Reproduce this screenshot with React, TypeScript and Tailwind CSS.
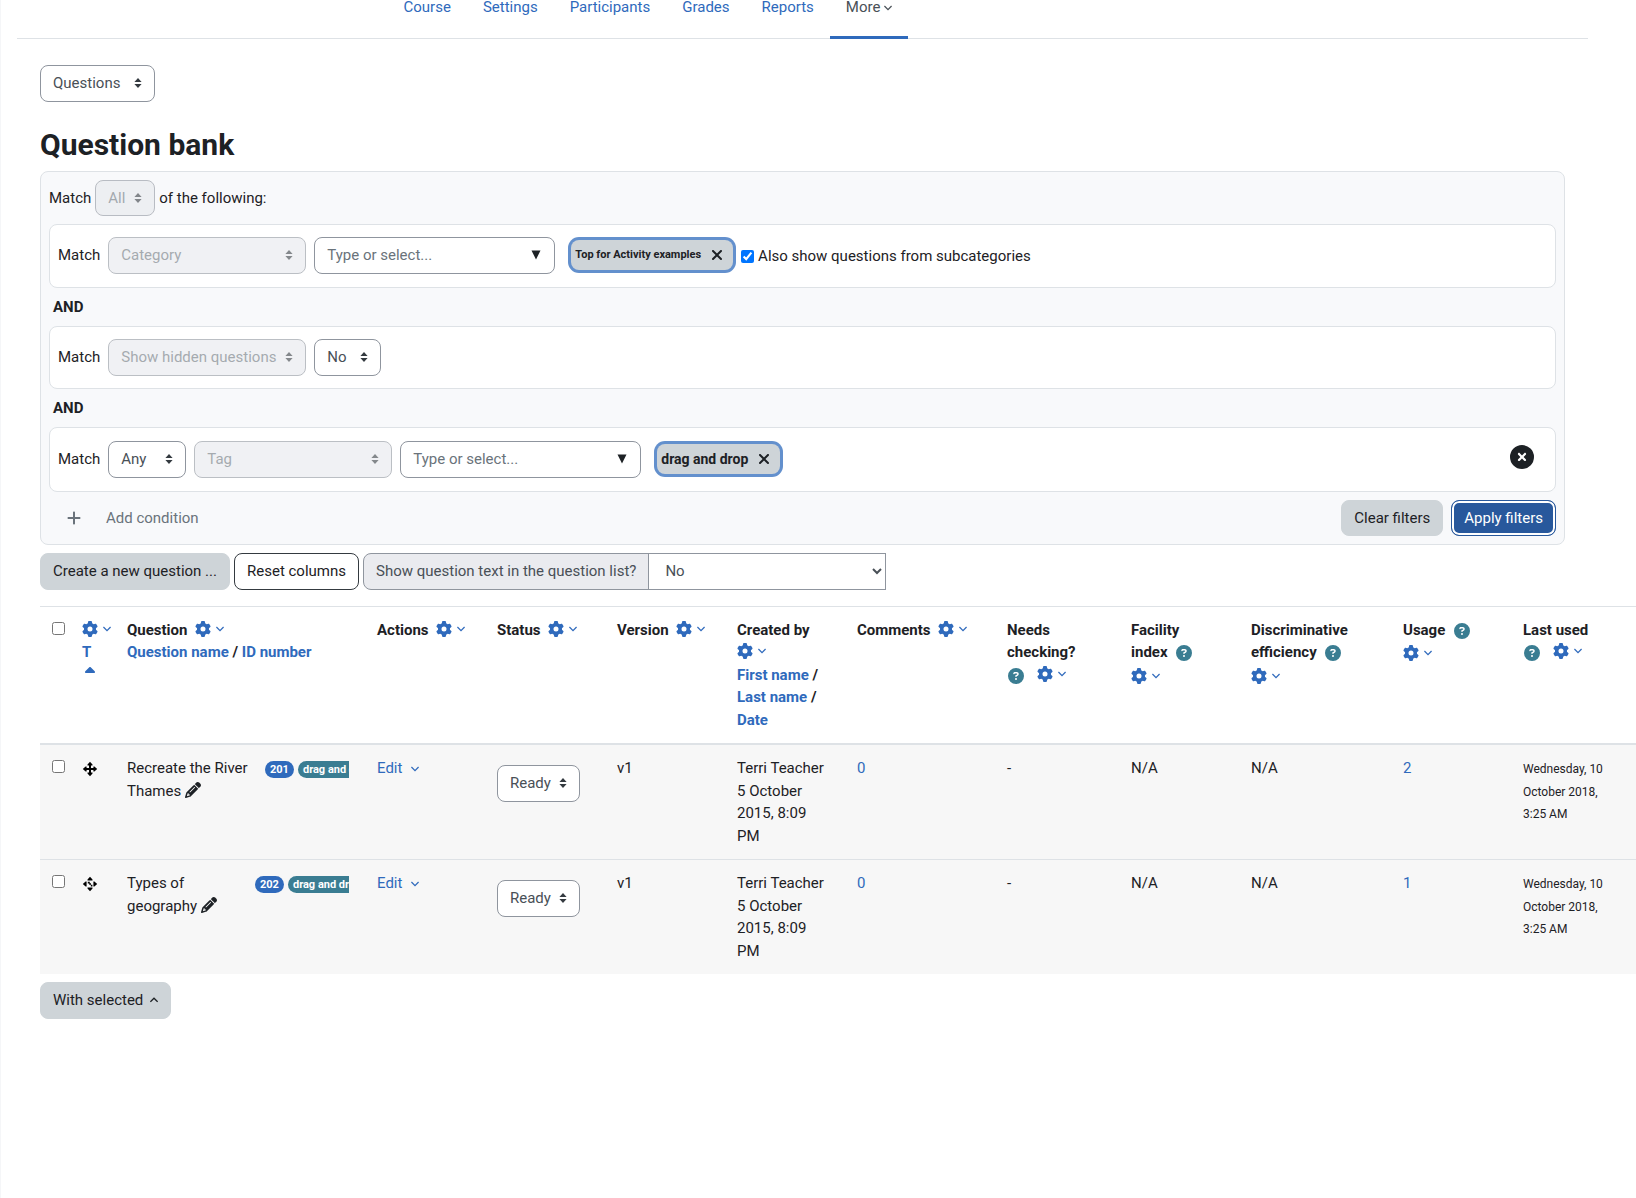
import type { ComponentProps, ReactNode } from "react";
import { FaCircleQuestion, FaCircleXmark, FaGear, FaPencil, FaPlus, FaSortUp, FaXmark } from "react-icons/fa6";

function Chevron({ up = false }: { up?: boolean }) {
  return (
    <svg viewBox="0 0 8 8" className="inline-block size-2 align-middle" fill="none" stroke="currentColor" strokeWidth="1.3" aria-hidden="true">
      <path d={up ? "M0.4 5.8 4 2.2 7.6 5.8" : "M0.4 2 4 5.6 7.6 2"} />
    </svg>
  );
}

function Updown() {
  return (
    <svg viewBox="0 0 8 10" className="pointer-events-none absolute right-[13px] top-1/2 h-[10px] w-2 -translate-y-1/2" fill="currentColor" aria-hidden="true">
      <path d="M4 0 7.600 4H.4zM4 10 .4 6h7.200z" />
    </svg>
  );
}

function Select({ label, value, width, disabled = false }: { label: string; value: string; width: string; disabled?: boolean }) {
  return (
    <span className={`relative inline-block text-[#343a40] ${disabled ? "opacity-60" : ""} ${width}`}>
      <select
        aria-label={label}
        disabled={disabled}
        className={`w-full appearance-none rounded-lg border border-[#8f959e] px-3 py-[6px] leading-normal opacity-100 ${
          disabled ? "bg-[#e7e9ed] text-[#6a737b]" : "bg-white text-[#495057]"
        }`}
      >
        <option>{value}</option>
      </select>
      <Updown />
    </span>
  );
}

function Combo({ label }: { label: string }) {
  return (
    <span className="relative inline-block w-[241px]">
      <input
        aria-label={label}
        placeholder="Type or select..."
        className="w-full rounded-lg border border-[#8f959e] bg-white py-[6px] pl-3 pr-8 leading-normal placeholder:text-[#6a737b]"
      />
      <svg viewBox="0 0 10 10" className="pointer-events-none absolute right-[14px] top-1/2 size-[10px] -translate-y-1/2" fill="currentColor" aria-hidden="true">
        <path d="M.5 .5h9L5 9.500z" />
      </svg>
    </span>
  );
}

function Token({ children, className }: { children: ReactNode; className: string }) {
  return (
    <button className={`m-[3px] flex h-[30px] items-center gap-2 rounded-lg bg-[#ced4d8] pr-2 pl-1 font-bold text-[#1d2125] ring-3 ring-[#6390cd] ${className}`}>
      {children}
      <FaXmark className="size-4" />
    </button>
  );
}

function Card({ children, className }: { children: ReactNode; className: string }) {
  return <div className={`flex items-start gap-2 rounded-lg border border-[#dee2e6] bg-white px-2 ${className}`}>{children}</div>;
}

function And() {
  return <div className="my-2 pl-1 font-bold">AND</div>;
}

function Gear({ className = "" }: { className?: string }) {
  return (
    <button aria-label="Column options" className={`inline-flex items-center gap-[5px] align-top text-[#2f6abc] ${className}`}>
      <FaGear className="size-4" />
      <span className="flex w-2">
        <Chevron />
      </span>
    </button>
  );
}

function Help({ className = "" }: { className?: string }) {
  return (
    <button aria-label="Help" className={`inline-block px-px align-middle text-[#3a7d92] ${className}`}>
      <FaCircleQuestion className="size-4" />
    </button>
  );
}

function Link(props: ComponentProps<"a">) {
  return <a href="#" {...props} className={`text-[#2f6abc] ${props.className ?? ""}`} />;
}

function MoveIcon({ text = false }: { text?: boolean }) {
  return (
    <svg viewBox="0 0 16 16" className="mt-1 size-4" fill="#000" aria-hidden="true">
      <path d="M8 .8 5.500 3.600v1h5v-1zM8 15.200l2.500-2.800v-1h-5v1zM.8 8l2.800-2.500h1v5h-1zM15.200 8l-2.800-2.500h-1v5h1z" />
      {text ? (
        <path d="M5.800 5.800h2v1.600h-2zM7.200 7.200h1.800v1.600H7.200zM8.800 8.800h1.600v1.600H8.800z" />
      ) : (
        <path d="M7 4h2v3h3v2H9v3H7V9H4V7h3z" />
      )}
    </svg>
  );
}

const rows = [
  { name: "Recreate the River Thames", id: "201", badges: "w-[84px]", text: false, usage: "2" },
  { name: "Types of geography", id: "202", badges: "w-[94px]", text: true, usage: "1" },
];

const tabs = ["Course", "Settings", "Participants", "Grades", "Reports"];

export default function App() {
  return (
    <div className="min-h-screen overflow-hidden border-l border-[#f5f6f8] bg-white font-[Roboto,sans-serif] text-[15px] leading-normal text-[#1d2125]">
      <nav className="mr-12 ml-4 border-b border-[#dee2e6]">
        <div className="mx-auto flex h-[38px] max-w-[830px] leading-[15px]">
          {tabs.map((t) => (
            <Link key={t} className="px-4">
              {t}
            </Link>
          ))}
          <a href="#" className="-mb-px border-b-3 border-[#2f6abc] px-4 text-[#495057]">
            More <Chevron />
          </a>
        </div>
      </nav>

      <main className="pt-[26px] pl-[39px]">
        <div className="flex">
          <Select label="Question bank navigation" value="Questions" width="w-[115px]" />
        </div>
        <h2 className="mt-[25px] mb-2 text-[30px] leading-[36px] font-bold">Question bank</h2>

        <section className="mr-[71px] rounded-lg border border-[#dee2e6] bg-[#f8f9fb] p-2">
          <div className="mb-2 flex items-center gap-1">
            <span>Match</span>
            <Select label="Join type" value="All" width="w-[60px]" disabled />
            <span>of the following:</span>
          </div>

          <Card className="pt-3 pb-[13px]">
            <span className="pt-[7px]">Match</span>
            <Select label="Filter" value="Category" width="w-[198px]" disabled />
            <Combo label="Category" />
            <div className="flex items-start pl-[5px]">
              <Token className="text-[11px]">Top for Activity examples</Token>
              <label className="flex items-center gap-1 pt-2 pl-[5px]">
                <input type="checkbox" defaultChecked className="size-[13px]" />
                Also show questions from subcategories
              </label>
            </div>
          </Card>
          <And />
          <Card className="py-3">
            <span className="pt-[7px]">Match</span>
            <Select label="Filter" value="Show hidden questions" width="w-[198px]" disabled />
            <Select label="Show hidden questions" value="No" width="w-[67px]" />
          </Card>
          <And />
          <Card className="py-[13px]">
            <span className="pt-[7px]">Match</span>
            <Select label="Match type" value="Any" width="w-[78px]" />
            <Select label="Filter" value="Tag" width="w-[198px]" disabled />
            <Combo label="Tag" />
            <div className="pl-[5px]">
              <Token className="text-[14px]">drag and drop</Token>
            </div>
            <button aria-label="Remove condition" className="mt-1 mr-[13px] ml-auto">
              <FaCircleXmark className="size-6" />
            </button>
          </Card>

          <div className="mt-2 flex items-center">
            <button className="flex items-center gap-6 pl-[17px] text-[#6a737b]">
              <FaPlus className="size-4" />
              Add condition
            </button>
            <button className="ml-auto rounded-lg border border-[#ced4d8] bg-[#ced4d8] px-3 py-[6px]">Clear filters</button>
            <button className="ml-2 rounded-lg border border-[#28589c] bg-[#28589c] px-3 py-[6px] text-white inset-ring-2 inset-ring-white">
              Apply filters
            </button>
          </div>
        </section>

        <div className="mt-2 flex gap-1">
          <button className="rounded-lg border border-[#ced4d8] bg-[#ced4d8] px-3 py-[6px]">Create a new question ...</button>
          <button className="rounded-lg border border-[#343a40] px-3 py-[6px]">Reset columns</button>
          <div className="flex text-[#495057]">
            <label htmlFor="qtext" className="rounded-l-lg border border-[#8f959e] bg-[#eaebef] px-3 py-[6px]">
              Show question text in the question list?
            </label>
            <select id="qtext" className="-ml-px w-[238px] border border-[#8f959e] bg-white pl-3">
              <option>No</option>
            </select>
          </div>
        </div>

        <table className="mt-4 w-full min-w-[1596px] table-fixed text-left align-top">
          <colgroup>
            <col className="w-[30px]" />
            <col className="w-[45px]" />
            <col className="w-[250px]" />
            <col className="w-[120px]" />
            <col className="w-[120px]" />
            <col className="w-[120px]" />
            <col className="w-[120px]" />
            <col className="w-[150px]" />
            <col className="w-[124px]" />
            <col className="w-[120px]" />
            <col className="w-[152px]" />
            <col className="w-[120px]" />
            <col />
          </colgroup>
          <thead>
            <tr className="border-t border-b-2 border-t-[#dee2e6] border-b-[#dee2e6] align-top [&>th]:py-3 [&>th]:pl-3">
              <th>
                <input type="checkbox" aria-label="Select all" className="mt-[3px] block size-[13px]" />
              </th>
              <th>
                <Gear className="mt-[2px]" />
                <div>
                  <Link>T</Link>
                </div>
                <FaSortUp className="mt-[2px] size-4 text-[#2f6abc]" />
              </th>
              <th>
                Question <Gear className="mt-[2px] ml-1" />
                <div>
                  <Link>Question name</Link> / <Link>ID number</Link>
                </div>
              </th>
              <th>Actions <Gear className="mt-[2px] ml-1" /></th>
              <th>Status <Gear className="mt-[2px] ml-1" /></th>
              <th>Version <Gear className="mt-[2px] ml-1" /></th>
              <th>
                Created by
                <div>
                  <Gear className="mt-[2px]" />
                </div>
                <Link>First name</Link> /<br />
                <Link>Last name</Link> /<br />
                <Link>Date</Link>
              </th>
              <th>Comments <Gear className="mt-[2px] ml-1" /></th>
              <th>
                Needs
                <br />
                checking?
                <br />
                <Help /> <Gear className="mt-[2px] ml-2" />
              </th>
              <th>
                Facility
                <br />
                index <Help className="ml-1" />
                <br />
                <Gear className="mt-1" />
              </th>
              <th>
                Discriminative
                <br />
                efficiency <Help className="ml-1" />
                <br />
                <Gear className="mt-1" />
              </th>
              <th>
                Usage <Help className="ml-1" />
                <br />
                <Gear className="mt-1" />
              </th>
              <th>
                Last used
                <br />
                <Help /> <Gear className="mt-[2px] ml-2" />
              </th>
            </tr>
          </thead>
          <tbody className="bg-[#f7f7f7]">
            {rows.map((r) => (
              <tr key={r.id} className="border-t border-[#dee2e6] align-top first:border-t-0 [&>td]:py-3 [&>td]:pl-3">
                <td>
                  <input type="checkbox" aria-label={`Select ${r.name}`} className="mt-[3px] block size-[13px]" />
                </td>
                <td>
                  <MoveIcon text={r.text} />
                </td>
                <td>
                  <div className="flex justify-between pr-4">
                    <span className="w-[121px]">
                      {r.name} <FaPencil className="inline size-4 align-[-2px]" />
                    </span>
                    <span className={`flex h-6 items-center gap-1 overflow-hidden text-[11px] leading-[17px] font-bold whitespace-nowrap text-white ${r.badges}`}>
                      <span className="rounded-full bg-[#2f6abc] px-[5px]">{r.id}</span>
                      <a href="#" className="rounded-full bg-[#3a7d92] px-[5px]">drag and drop</a>
                    </span>
                  </div>
                </td>
                <td>
                  <Link>Edit <span className="ml-[5px]"><Chevron /></span></Link>
                </td>
                <td>
                  <div className="mt-2">
                    <Select label="Question status" value="Ready" width="w-[83px]" />
                  </div>
                </td>
                <td>v1</td>
                <td>
                  Terri Teacher
                  <br />5 October
                  <br />
                  2015, 8:09
                  <br />
                  PM
                </td>
                <td>
                  <Link>0</Link>
                </td>
                <td>-</td>
                <td>N/A</td>
                <td>N/A</td>
                <td>
                  <Link>{r.usage}</Link>
                </td>
                <td>
                  <small className="text-[12px]">
                    Wednesday, 10
                    <br />
                    October 2018,
                    <br />
                    3:25 AM
                  </small>
                </td>
              </tr>
            ))}
          </tbody>
        </table>

        <button className="mt-2 flex items-center gap-[7px] rounded-lg border border-[#ced4d8] bg-[#ced4d8] px-3 py-[6px]">
          With selected <Chevron up />
        </button>
      </main>
    </div>
  );
}
